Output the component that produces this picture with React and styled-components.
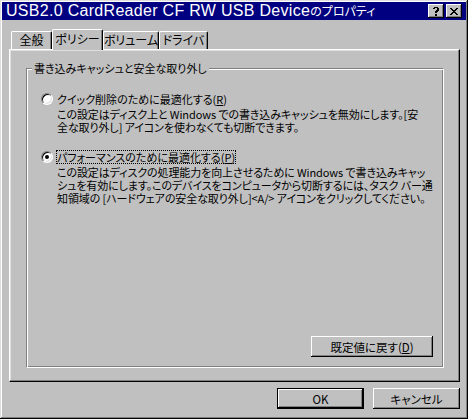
import React from 'react';
import styled, { createGlobalStyle } from 'styled-components';

const Global = createGlobalStyle`
  html, body { margin: 0; padding: 0; background: #c0c0c0; }
  body {
    font-family: "Noto Sans CJK JP", "Noto Sans", sans-serif;
    font-size: 11px;
    color: #000;
  }
  * { box-sizing: border-box; }
`;

const Window = styled.div`
  width: 468px;
  height: 419px;
  background: #c0c0c0;
  padding: 2px;
  display: flex;
  flex-direction: column;
  box-shadow: inset -1px -1px #000, inset 1px 1px #dfdfdf,
    inset -2px -2px #808080, inset 2px 2px #fff;
`;

const TitleBar = styled.div`
  height: 18px;
  background: #000080;
  color: #fff;
  display: flex;
  align-items: center;
  padding: 0 4px 0 4px;
`;

const TitleText = styled.div`
  flex: 1;
  font-family: "Liberation Sans", "Noto Sans CJK JP", sans-serif;
  font-size: 16px;
  letter-spacing: 0.3px;
  line-height: 18px;
  white-space: nowrap;
`;

const TitleJp = styled.span`
  font-family: "Noto Sans CJK JP", sans-serif;
  font-size: 12px;
  letter-spacing: 0;
  font-feature-settings: "palt";
`;

const CaptionButton = styled.div`
  width: 16px;
  height: 14px;
  margin-left: ${p => p.$gap}px;
  background: #c0c0c0;
  box-shadow: inset -1px -1px #000, inset 1px 1px #fff, inset -2px -2px #808080;
  display: flex;
  align-items: center;
  justify-content: center;
  color: #000;
`;

const Body = styled.div`
  flex: 1;
  display: flex;
  flex-direction: column;
  padding: 9px 6px 0 7px;
`;

const TabStrip = styled.div`
  display: flex;
  align-items: flex-end;
  height: 20px;
  padding-left: 2px;
  position: relative;
  z-index: 1;
`;

const Tab = styled.div`
  width: ${p => p.$w}px;
  height: ${p => (p.$active ? 21 : 18)}px;
  margin-bottom: ${p => (p.$active ? -1 : 0)}px;
  background: #c0c0c0;
  border-top: 1px solid #fff;
  border-left: 1px solid #fff;
  border-right: 1px solid #000;
  border-radius: 2px 2px 0 0;
  box-shadow: inset -1px 0 #808080;
  display: flex;
  justify-content: center;
  padding-top: ${p => (p.$active ? 2 : 1)}px;
  font-size: 12px;
  line-height: 14px;
  font-feature-settings: "palt";
  white-space: nowrap;
`;

const Panel = styled.div`
  height: 333px;
  border-top: 1px solid #fff;
  border-left: 1px solid #fff;
  border-right: 1px solid #000;
  border-bottom: 1px solid #000;
  box-shadow: inset -1px -1px #808080, inset 1px 1px #dfdfdf;
  display: flex;
  flex-direction: column;
  padding: 18px 15px 13px 16px;
`;

const GroupBox = styled.div`
  flex: 1;
  position: relative;
  border: 1px solid;
  border-color: #808080 #fff #fff #808080;
  box-shadow: inset 1px 1px #fff, inset -1px -1px #808080;
  display: flex;
  flex-direction: column;
  padding: 21px 10px 10px 14px;
`;

const Legend = styled.div`
  position: absolute;
  left: 5px;
  top: -8px;
  padding: 0 2px;
  background: #c0c0c0;
  font-size: 11px;
  line-height: 14px;
  font-feature-settings: "palt";
  white-space: nowrap;
`;

const Option = styled.div`
  display: grid;
  grid-template-columns: 12px 1fr;
  column-gap: 4px;
  margin-top: ${p => p.$mt}px;
`;

const Radio = styled.div`
  width: 12px;
  height: 12px;
  margin-top: 1px;
  border-radius: 50%;
  border: 1px solid;
  border-color: #808080 #fff #fff #808080;
  background: #fff;
  box-shadow: inset 1px 1px #000, inset -1px -1px #dfdfdf;
  display: flex;
  align-items: center;
  justify-content: center;
  &::after {
    content: "";
    width: 4px;
    height: 4px;
    border-radius: 50%;
    background: ${p => (p.$checked ? '#000' : 'transparent')};
  }
`;

const OptionLabel = styled.div`
  justify-self: start;
  font-size: 11px;
  line-height: 12px;
  padding: 1px 1px;
  margin-left: -1px;
  outline: ${p => (p.$focus ? '1px dotted #000' : 'none')};
  outline-offset: -1px;
  font-feature-settings: "palt";
  white-space: nowrap;
`;

const Desc = styled.div`
  grid-column: 2;
  margin-top: 2px;
  font-size: 11px;
  line-height: 13px;
  letter-spacing: -0.1px;
  font-feature-settings: "palt";
  white-space: nowrap;
`;

const Line = styled.div``;

const U = styled.span`
  text-decoration: underline;
`;

const ButtonRow = styled.div`
  display: flex;
  justify-content: flex-end;
  gap: ${p => p.$gap || 0}px;
  margin-top: ${p => (p.$auto ? 'auto' : `${p.$mt}px`)};
`;

const Button = styled.div`
  width: ${p => p.$w}px;
  height: ${p => p.$h}px;
  background: #c0c0c0;
  display: flex;
  align-items: center;
  justify-content: center;
  font-size: 11.5px;
  font-feature-settings: "palt";
  box-shadow: ${p =>
    p.$default
      ? 'inset 0 0 0 1px #000, inset -2px -2px #000, inset 2px 2px #fff, inset -3px -3px #808080'
      : 'inset -1px -1px #000, inset 1px 1px #fff, inset -2px -2px #808080'};
`;

export default function App() {
  return (
    <>
      <Global />
      <Window>
        <TitleBar>
          <TitleText>
            USB2.0 CardReader CF RW USB Device<TitleJp>のプロパティ</TitleJp>
          </TitleText>
          <CaptionButton $gap={0}>
            <svg width="8" height="9" viewBox="0 0 8 9">
              <path d="M1 1h1V0h4v1h1v3H6v1H5v1H3V4h1V3h1V1H3v1H1z M3 7h2v2H3z" fill="#000" />
            </svg>
          </CaptionButton>
          <CaptionButton $gap={2}>
            <svg width="8" height="7" viewBox="0 0 8 7">
              <path d="M0 0h2v1h1v1h2V1h1V0h2v1H7v1H6v1H5v1h1v1h1v1h1v1H6V6H5V5H3v1H2v1H0V6h1V5h1V4h1V3H2V2H1V1H0z" fill="#000" />
            </svg>
          </CaptionButton>
        </TitleBar>
        <Body>
          <TabStrip>
            <Tab $w={41}>全般</Tab>
            <Tab $w={51} $active>ポリシー</Tab>
            <Tab $w={56}>ボリューム</Tab>
            <Tab $w={49}>ドライバ</Tab>
          </TabStrip>
          <Panel>
            <GroupBox>
              <Legend>書き込みキャッシュと安全な取り外し</Legend>
              <Option $mt={2}>
                <Radio />
                <OptionLabel>
                  クイック削除のために最適化する(<U>R</U>)
                </OptionLabel>
                <Desc>
                  <Line>この設定はディスク上と Windows での書き込みキャッシュを無効にします。[安</Line>
                  <Line>全な取り外し] アイコンを使わなくても切断できます。</Line>
                </Desc>
              </Option>
              <Option $mt={16}>
                <Radio $checked />
                <OptionLabel $focus>
                  パフォーマンスのために最適化する(<U>P</U>)
                </OptionLabel>
                <Desc>
                  <Line>この設定はディスクの処理能力を向上させるために Windows で書き込みキャッ</Line>
                  <Line>シュを有効にします。このデバイスをコンピュータから切断するには、タスク バー通</Line>
                  <Line>知領域の [ハードウェアの安全な取り外し]&lt;A/&gt; アイコンをクリックしてください。</Line>
                </Desc>
              </Option>
              <ButtonRow $auto>
                <Button $w={122} $h={21}>
                  既定値に戻す(<U>D</U>)
                </Button>
              </ButtonRow>
            </GroupBox>
          </Panel>
          <ButtonRow $mt={6} $gap={9}>
            <Button $w={87} $h={21} $default>OK</Button>
            <Button $w={87} $h={21}>キャンセル</Button>
          </ButtonRow>
        </Body>
      </Window>
    </>
  );
}
